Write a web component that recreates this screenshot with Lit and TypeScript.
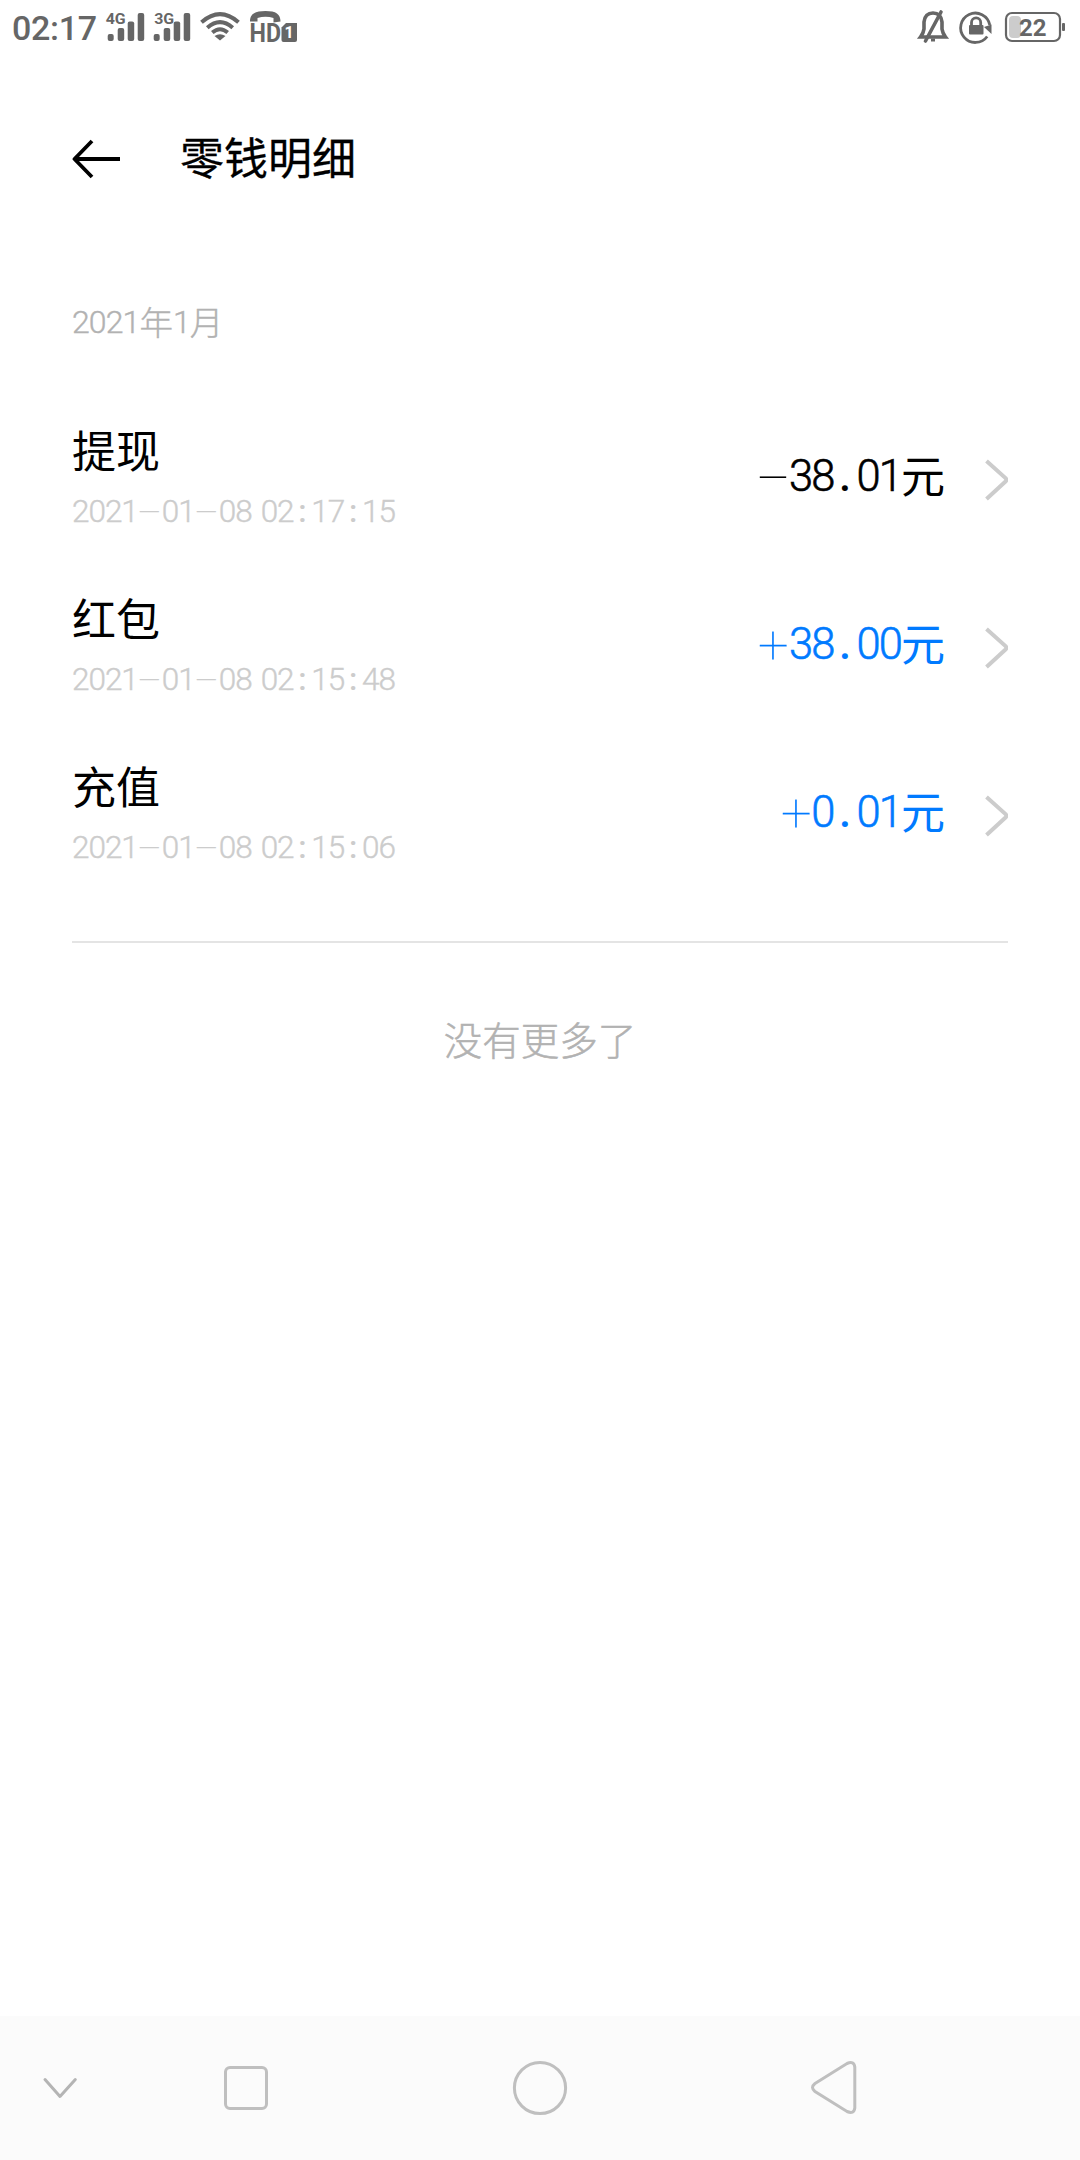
import { LitElement, html, css, svg } from "lit";
import { customElement, property } from "lit/decorators.js";

interface Entry {
  title: string;
  date: string;
  time: string;
  amount: string;
}

const entries: Entry[] = [
  { title: "提现", date: "2021-01-08", time: "02:17:15", amount: "-38.01" },
  { title: "红包", date: "2021-01-08", time: "02:15:48", amount: "+38.00" },
  { title: "充值", date: "2021-01-08", time: "02:15:06", amount: "+0.01" },
];

/** Numeric text whose punctuation sits in its own, wider cells. */
@customElement("spaced-number")
export class SpacedNumber extends LitElement {
  @property() value = "";

  static styles = css`
    :host {
      display: inline-flex;
      align-items: baseline;
      white-space: pre;
    }
    .digits {
      letter-spacing: var(--tight);
      -webkit-text-stroke: var(--weight) currentColor;
    }
    .cell {
      display: inline-block;
      text-align: center;
      flex: none;
    }
    .hyphen {
      width: var(--dash-cell);
    }
    .plus {
      width: var(--dash-cell);
    }
    .colon,
    .dot {
      width: var(--point-cell);
    }
    .space {
      width: 9px;
    }
    .glyph {
      display: inline-block;
    }
    .hyphen .glyph {
      transform: var(--dash-shape);
    }
    .plus .glyph {
      transform: var(--plus-shape);
      font-weight: 100;
      -webkit-text-stroke: 0.2px currentColor;
    }
    .colon .glyph,
    .dot .glyph {
      font-weight: 500;
    }
  `;

  private part(text: string) {
    const kinds: Record<string, string> = {
      "-": "hyphen",
      "+": "plus",
      ":": "colon",
      ".": "dot",
      " ": "space",
    };
    const kind = kinds[text];
    return kind
      ? html`<span class="cell ${kind}"><span class="glyph">${text}</span></span>`
      : html`<span class="digits">${text}</span>`;
  }

  render() {
    return this.value.split(/([-+:. ])/).filter((p) => p).map((p) => this.part(p));
  }
}

@customElement("status-bar")
export class StatusBar extends LitElement {
  static styles = css`
    :host {
      display: block;
      height: 56px;
    }
    svg {
      display: block;
    }
    .clock {
      font: 500 34px Roboto, sans-serif;
    }
    .net {
      font: 700 15px Roboto, sans-serif;
    }
    .hd {
      font: 700 25.5px Roboto, sans-serif;
    }
    .sim {
      font: 700 16px Roboto, sans-serif;
    }
    .level {
      font: 700 24px Roboto, sans-serif;
    }
  `;

  private signal(x: number, label: string, labelX: number) {
    return svg`<g transform="translate(${x} 0)">
      <text class="net" x=${labelX} y="24" textLength="20" lengthAdjust="spacingAndGlyphs">${label}</text>
      <rect x="0" y="34" width="6" height="7" rx="2"/>
      <rect x="10" y="28" width="6.5" height="13" rx="2"/>
      <rect x="20" y="21.5" width="6.5" height="19.5" rx="2"/>
      <rect x="30" y="13" width="6.5" height="28" rx="2"/>
    </g>`;
  }

  render() {
    return html`<svg width="1080" height="56" viewBox="0 0 1080 56" fill="#666">
      <text class="clock" x="12" y="40.300" textLength="85">02:17</text>
      ${this.signal(107.7, "4G", -2)} ${this.signal(153.7, "3G", 0.5)}
      <g fill="none" stroke="#666" stroke-width="4">
        <path d="M201.5 22.2Q220 6 238.500 22.200"/>
        <path d="M207.300 27.700Q220 16.500 232.700 27.700"/>
        <path d="M212.300 32.500Q220 26 227.700 32.500"/>
      </g>
      <path d="M214.500 36Q220 32.500 225.500 36L220 40.500Z"/>
      <path d="M250 21.500C250 14 255 11 265.500 11S280.500 14 280.500 21.500L273.500 22.500V18Q265.500 15.500 257.500 18V21.500Z"/>
      <text class="hd" x="249.500" y="42" textLength="31.500" lengthAdjust="spacingAndGlyphs">HD</text>
      <path d="M286 23H297V40Q297 42 295 42H283.500Q281.500 42 281.500 40V27.500Z"/>
      <text class="sim" x="284.600" y="38.300" fill="#fff">1</text>
      <g fill="none" stroke="#666" stroke-width="3.600">
        <path d="M920.500 37H945.500Q942.500 33 942 29V22Q941 13 933 13T924 22V29Q923.500 33 920.500 37Z"/>
        <path d="M925.500 41L941 12" stroke-linecap="round"/>
        <path d="M931 40H935" stroke-width="3"/>
      </g>
      <path d="M987.200 36.500A14.700 14.700 0 1 1 989.800 25" fill="none" stroke="#666" stroke-width="2.800"/>
      <path d="M984 27L991.500 24.500V34Z"/>
      <rect x="969" y="25" width="14.500" height="9.500" rx="1"/>
      <path d="M971.500 26V22.500A4.600 4.600 0 0 1 980.700 22.500V26" fill="none" stroke="#666" stroke-width="2.800"/>
      <rect x="1009" y="16" width="12" height="22" rx="4" fill="#ccc"/>
      <rect x="1006" y="13" width="54" height="28" rx="6" fill="none" stroke="#666" stroke-width="2.200"/>
      <rect x="1062" y="23" width="3" height="8" rx="1"/>
      <text class="level" x="1019" y="35.800">22</text>
    </svg>`;
  }
}

@customElement("navigation-bar")
export class NavigationBar extends LitElement {
  static styles = css`
    :host {
      display: block;
      height: 144px;
      background: #fbfbfb;
    }
    svg {
      display: block;
    }
  `;

  render() {
    return html`<svg width="1080" height="144" viewBox="0 0 1080 144" fill="none" stroke="#bfbfbf" stroke-width="3">
      <path d="M45 63.500L60 80.500L75.300 63.500" stroke="#b4b4b4" stroke-linecap="round" stroke-linejoin="round"/>
      <rect x="225.500" y="51.500" width="41" height="41" rx="4.500"/>
      <circle cx="540" cy="72" r="25.600"/>
      <path d="M815 67.500L847 47.500Q854 44.500 854.800 51V92Q854 98.500 847 95.500L815 75.500Q810 71.500 815 67.500Z"/>
    </svg>`;
  }
}

@customElement("app-root")
export class AppRoot extends LitElement {
  static styles = css`
    :host {
      display: flex;
      flex-direction: column;
      width: 1080px;
      height: 2160px;
      background: #fff;
      color: #000;
      font-family: "Noto Sans CJK SC", sans-serif;
    }
    .header {
      display: flex;
      align-items: center;
      gap: 60px;
      height: 80px;
      padding: 63px 72px 0;
    }
    h1 {
      margin: 0;
      padding-bottom: 7px;
      font-size: 44px;
      line-height: 80px;
      font-weight: 400;
      -webkit-text-stroke: 0.3px #000;
    }
    svg {
      display: block;
      flex: none;
    }
    .content {
      flex: 1;
      padding: 0 72px;
    }
    .month {
      margin-top: 98px;
      height: 99px;
      font-size: 33.5px;
      line-height: 48px;
      color: #b2b2b2;
      display: flex;
      align-items: baseline;
      font-weight: 300;
      -webkit-text-stroke: 0.4px currentColor;
    }
    .num {
      font-family: Roboto, "Liberation Sans", sans-serif;
      font-weight: 300;
      font-size: 32px;
      letter-spacing: -0.9px;
      position: relative;
      top: -2.5px;
    }
    .row {
      display: flex;
      align-items: center;
      height: 168px;
    }
    .info {
      flex: 1;
    }
    .title {
      font-size: 44px;
      line-height: 60px;
      padding-bottom: 3px;
    }
    .stamp {
      font: 300 31.5px/60px Roboto, "Liberation Sans", sans-serif;
      color: #ccc;
      --tight: -1.02px;
      --weight: 0.4px;
      --dash-cell: 24px;
      --point-cell: 17.8px;
      --dash-shape: scale(2.6, 0.8);
    }
    .amount {
      display: flex;
      align-items: baseline;
      padding-bottom: 7px;
      font-size: 44px;
      line-height: 60px;
    }
    .figure {
      position: relative;
      top: -2px;
      font: 300 43.5px/60px Roboto, "Liberation Sans", sans-serif;
      --tight: -1.9px;
      --weight: 0.6px;
      --dash-cell: 31px;
      --point-cell: 23px;
      --dash-shape: scale(2.6, 0.7);
      --plus-shape: scale(1.25);
    }
    .income {
      color: #007aff;
    }
    .chevron {
      margin-left: 40px;
    }
    .end {
      margin-top: 41px;
      border-top: 2px solid #e4e4e4;
      padding-top: 65px;
      font-size: 38.5px;
      line-height: 60px;
      text-align: center;
      color: #b2b2b2;
      font-weight: 300;
      -webkit-text-stroke: 0.5px currentColor;
    }
  `;

  private row(e: Entry) {
    return html`<div class="row">
      <div class="info">
        <div class="title">${e.title}</div>
        <spaced-number class="stamp" .value=${e.date + " " + e.time}></spaced-number>
      </div>
      <div class="amount ${e.amount.startsWith("+") ? "income" : ""}">
        <spaced-number class="figure" .value=${e.amount}></spaced-number><span>元</span>
      </div>
      <svg class="chevron" width="23" height="42" viewBox="0 0 23 42" fill="none" stroke="#ccc" stroke-width="4">
        <path d="M1.500 2L20.500 19Q22 21 20.500 22.500L1.500 40" />
      </svg>
    </div>`;
  }

  render() {
    return html`
      <status-bar></status-bar>
      <div class="header">
        <svg width="48" height="40" viewBox="0 0 48 40" fill="none" stroke="#000" stroke-width="3.800">
          <path d="M48 20H3M20 2L2.500 20L20 38" stroke-linejoin="round" />
        </svg>
        <h1>零钱明细</h1>
      </div>
      <div class="content">
        <div class="month"><span class="num">2021</span><span>年</span><span class="num">1</span><span>月</span></div>
        ${entries.map((e) => this.row(e))}
        <div class="end">没有更多了</div>
      </div>
      <navigation-bar></navigation-bar>
    `;
  }
}
